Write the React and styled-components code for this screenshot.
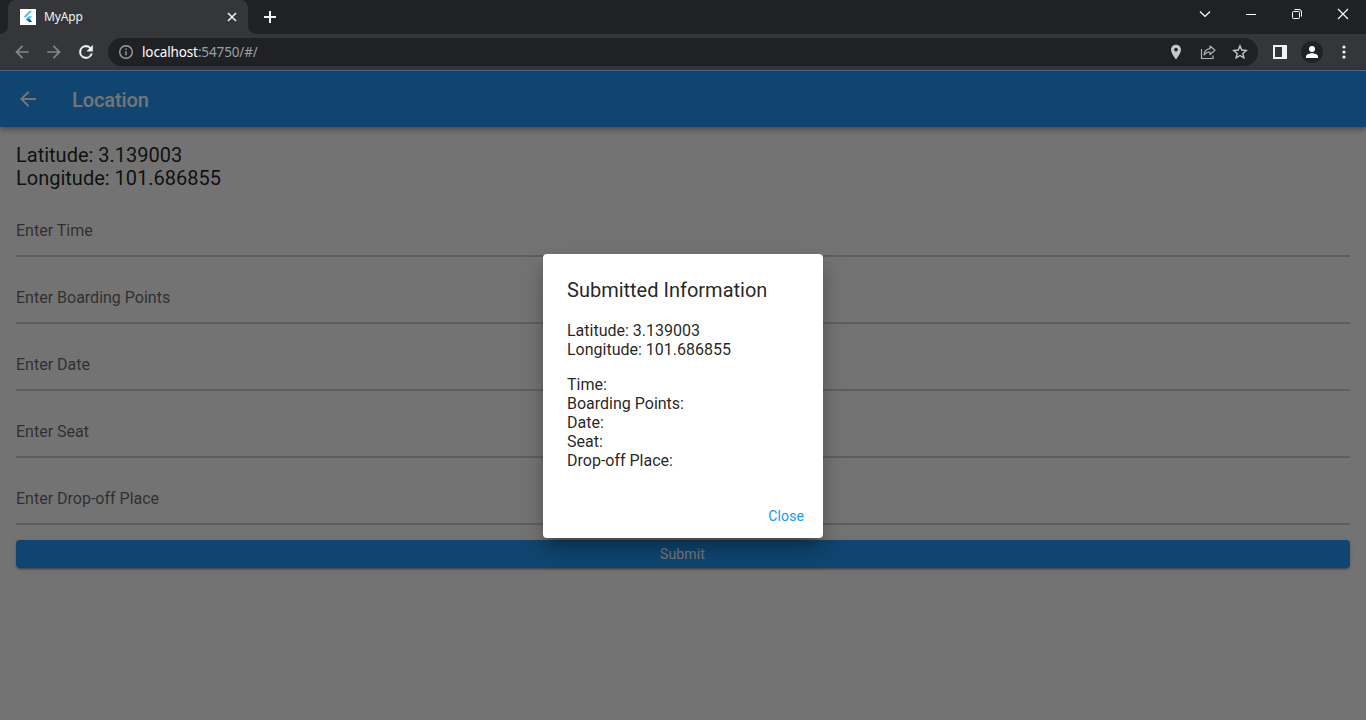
import React from "react";
import styled, { createGlobalStyle } from "styled-components";

const Global = createGlobalStyle`
  * { box-sizing: border-box; }
  html, body { margin: 0; padding: 0; height: 100%; overflow: hidden; }
  svg { display: block; flex: none; }
`;

const Browser = styled.div`
  width: 1366px;
  height: 720px;
  display: flex;
  flex-direction: column;
  overflow: hidden;
  background: #202124;
  font-family: "Noto Sans", "Open Sans", sans-serif;
`;

const TabStrip = styled.div`
  height: 34px;
  flex: none;
  display: flex;
  padding-left: 8px;
`;

const Tab = styled.div`
  position: relative;
  width: 240px;
  height: 34px;
  padding: 0 10px 0 12px;
  display: flex;
  align-items: center;
  border-radius: 8px 8px 0 0;
  background: #35363a;
  &::before, &::after {
    content: "";
    position: absolute;
    bottom: 0;
    width: 8px;
    height: 8px;
  }
  &::before {
    left: -8px;
    background: radial-gradient(circle at 0 0, transparent 7.5px, #35363a 8px);
  }
  &::after {
    right: -8px;
    background: radial-gradient(circle at 100% 0, transparent 7.5px, #35363a 8px);
  }
`;

const TabTitle = styled.span`
  flex: 1;
  margin-left: 8px;
  padding-bottom: 1px;
  font-size: 12px;
  line-height: 16px;
  letter-spacing: -0.15px;
  color: #f1f3f4;
`;

const NewTab = styled.div`
  width: 44px;
  display: flex;
  align-items: center;
  justify-content: center;
`;

const WindowButtons = styled.div`
  margin-left: auto;
  display: flex;
  height: 28px;
`;

const WindowButton = styled.div`
  width: 46px;
  display: flex;
  align-items: center;
  justify-content: center;
`;

const Toolbar = styled.div`
  height: 36px;
  flex: none;
  display: flex;
  align-items: center;
  padding: 0 6px;
  background: #35363a;
`;

const ToolButton = styled.div`
  width: 32px;
  height: 28px;
  display: flex;
  align-items: center;
  justify-content: center;
`;

const AddressBar = styled.div`
  flex: 1;
  height: 28px;
  margin: 0 6px;
  padding: 0 2px 0 10px;
  display: flex;
  align-items: center;
  border-radius: 14px;
  background: #202124;
`;

const Url = styled.span`
  flex: 1;
  margin-left: 8px;
  font-size: 13.5px;
  letter-spacing: -0.13px;
  color: #9aa0a6;
  white-space: nowrap;
`;

const Host = styled.span`
  color: #ffffff;
`;

const Avatar = styled.div`
  width: 22px;
  height: 22px;
  border-radius: 50%;
  display: flex;
  align-items: center;
  justify-content: center;
  background: #202124;
`;

const Divider = styled.div`
  height: 1px;
  flex: none;
  background: #4b6e8c;
`;

const Viewport = styled.div`
  position: relative;
  flex: 1;
  display: flex;
  flex-direction: column;
  background: #fafafa;
  font-family: Roboto, sans-serif;
`;

const AppBar = styled.header`
  height: 56px;
  flex: none;
  display: flex;
  align-items: center;
  gap: 32px;
  padding: 0 16px;
  background: #2196f3;
  box-shadow: 0 2px 4px -1px rgba(0, 0, 0, 0.2), 0 4px 5px rgba(0, 0, 0, 0.14),
    0 1px 10px rgba(0, 0, 0, 0.12);
`;

const AppTitle = styled.h1`
  margin: 0;
  padding-top: 2px;
  font-size: 20px;
  font-weight: 500;
  line-height: 24px;
  letter-spacing: -0.1px;
  color: #ffffff;
`;

const Content = styled.main`
  padding: 17px 16px 16px;
  display: flex;
  flex-direction: column;
`;

const Coordinates = styled.div`
  font-size: 20px;
  line-height: 23px;
  color: rgba(0, 0, 0, 0.87);
`;

const Form = styled.div`
  margin-top: 16px;
  display: flex;
  flex-direction: column;
  gap: 16px;
`;

const Field = styled.div`
  height: 51px;
  padding-top: 15px;
  border-bottom: 2px solid #cccccc;
  font-size: 16px;
  line-height: 19px;
  color: rgba(0, 0, 0, 0.6);
`;

const SubmitButton = styled.button`
  height: 28px;
  margin-top: 15px;
  padding: 0 1px 0 0;
  border: 0;
  border-radius: 4px;
  background: #2196f3;
  color: #ffffff;
  font: 400 14px/28px Roboto, sans-serif;
  letter-spacing: 0.1px;
  box-shadow: 0 3px 1px -2px rgba(0, 0, 0, 0.2), 0 2px 2px rgba(0, 0, 0, 0.14),
    0 1px 5px rgba(0, 0, 0, 0.12);
`;

const Scrim = styled.div`
  position: absolute;
  inset: 0;
  display: flex;
  align-items: center;
  justify-content: center;
  background: rgba(0, 0, 0, 0.54);
`;

const Dialog = styled.section`
  width: 280px;
  height: 284px;
  display: flex;
  flex-direction: column;
  border-radius: 4px;
  background: #ffffff;
  box-shadow: 0 10px 14px -6px rgba(0, 0, 0, 0.3), 0 10px 24px rgba(0, 0, 0, 0.2);
`;

const DialogTitle = styled.h2`
  margin: 0;
  padding: 24px 24px 19px;
  font-size: 20px;
  font-weight: 400;
  line-height: 24px;
  color: rgba(0, 0, 0, 0.87);
`;

const DialogBody = styled.div`
  flex: 1;
  padding: 0 24px;
  display: flex;
  flex-direction: column;
  gap: 16px;
  font-size: 16px;
  line-height: 19px;
  color: rgba(0, 0, 0, 0.87);
`;

const DialogActions = styled.div`
  display: flex;
  justify-content: flex-end;
  padding: 8px;
`;

const TextButton = styled.button`
  height: 28px;
  min-width: 56px;
  padding: 0 11px;
  border: 0;
  background: none;
  color: #2196f3;
  font: 400 14px/28px Roboto, sans-serif;
  letter-spacing: 0.1px;
`;

const FIELDS = ["Enter Time", "Enter Boarding Points", "Enter Date", "Enter Seat", "Enter Drop-off Place"];
const DETAILS = ["Time:", "Boarding Points:", "Date:", "Seat:", "Drop-off Place:"];

const FlutterLogo = () => (
  <svg width="16" height="16" viewBox="0 0 16 16">
    <rect width="16" height="16" fill="#fff" />
    <path d="M9.2 2H12.2L5.3 8.9 3.8 7.4Z" fill="#54c5f8" />
    <path d="M9.2 7H12.2L8.4 10.8 6.8 9.4Z" fill="#54c5f8" />
    <path d="M6.8 9.4 8.3 7.9 11 10.8 8.4 11Z" fill="#29a8ee" />
    <path d="M6.8 9.4 8.4 11 9.9 10.2 12.2 13H9.2L6.2 10.6Z" fill="#01579b" />
  </svg>
);

const ArrowIcon = ({ color, size = 20, flip }) => (
  <svg width={size} height={size} viewBox="0 0 24 24" fill={color}>
    <path
      transform={flip ? "rotate(180 12 12)" : undefined}
      d="M20 11H7.83l5.59-5.59L12 4l-8 8 8 8 1.41-1.41L7.83 13H20v-2z"
    />
  </svg>
);

const ReloadIcon = () => (
  <svg width="20" height="20" viewBox="0 0 24 24" fill="#f1f3f4" stroke="#f1f3f4" strokeWidth=".5">
    <path d="M17.65 6.35A7.96 7.96 0 0 0 12 4a8 8 0 1 0 7.73 10h-2.08A6 6 0 1 1 12 6c1.66 0 3.14.69 4.22 1.78L13 11h7V4z" />
  </svg>
);

export default function App() {
  return (
    <>
      <Global />
      <Browser>
        <TabStrip>
          <Tab>
            <FlutterLogo />
            <TabTitle>MyApp</TabTitle>
            <svg width="12" height="12" viewBox="0 0 12 12" stroke="#f1f3f4" strokeWidth="1.5">
              <path d="M2 2l8 8M10 2l-8 8" />
            </svg>
          </Tab>
          <NewTab>
            <svg width="14" height="14" viewBox="0 0 14 14" stroke="#f1f3f4" strokeWidth="2">
              <path d="M7 1v12M1 7h12" />
            </svg>
          </NewTab>
          <WindowButtons>
            <WindowButton>
              <svg width="12" height="12" viewBox="0 0 12 12" fill="none" stroke="#fff" strokeWidth="1.2">
                <path d="M1 3.5l5 5 5-5" />
              </svg>
            </WindowButton>
            <WindowButton>
              <svg width="12" height="12" viewBox="0 0 12 12" stroke="#fff">
                <path d="M1 6.5h10" />
              </svg>
            </WindowButton>
            <WindowButton>
              <svg width="12" height="12" viewBox="0 0 12 12" fill="none" stroke="#fff">
                <rect x="1.5" y="3.5" width="7" height="7" rx="1" />
                <path d="M3.5 1.5h4.5a2.5 2.5 0 0 1 2.5 2.5v4.5" />
              </svg>
            </WindowButton>
            <WindowButton>
              <svg width="12" height="12" viewBox="0 0 12 12" stroke="#fff" strokeWidth="1.1">
                <path d="M1 1l10 10M11 1L1 11" />
              </svg>
            </WindowButton>
          </WindowButtons>
        </TabStrip>
        <Toolbar>
          <ToolButton><ArrowIcon color="#85878a" /></ToolButton>
          <ToolButton><ArrowIcon color="#85878a" flip /></ToolButton>
          <ToolButton><ReloadIcon /></ToolButton>
          <AddressBar>
            <svg width="16" height="16" viewBox="0 0 16 16" fill="none" stroke="#9aa0a6" strokeWidth="1.4">
              <circle cx="8" cy="8" r="6.3" />
              <path d="M8 7.2v4M8 4.6v1.5" />
            </svg>
            <Url><Host>localhost</Host>:54750/#/</Url>
            <ToolButton>
              <svg width="16" height="16" viewBox="0 0 24 24" fill="#c4c7c9">
                <path d="M12 1C7.6 1 4.5 4.3 4.5 8.5 4.5 14 12 23 12 23s7.5-9 7.5-14.5C19.5 4.3 16.4 1 12 1zm0 10.2a2.7 2.7 0 1 1 0-5.4 2.7 2.7 0 0 1 0 5.4z" />
              </svg>
            </ToolButton>
            <ToolButton>
              <svg width="16" height="16" viewBox="0 0 16 16" fill="none" stroke="#b0b3b6" strokeWidth="1.2">
                <path d="M1.500 5v9.500h11.500V11.500" />
                <path d="M10 2l5 4.300-5 4.200V8C7.500 8 5.500 8.900 4 11c.4-3.500 2.500-6 6-6.400z" strokeLinejoin="round" />
              </svg>
            </ToolButton>
            <ToolButton>
              <svg width="16" height="16" viewBox="0 0 16 16" fill="none" stroke="#c4c7c9" strokeWidth="1.4">
                <path d="M8 1.900l1.750 4.150 4.500.4-3.400 2.950 1 4.400L8 11.500l-3.850 2.300 1-4.400-3.400-2.950 4.500-.4z" />
              </svg>
            </ToolButton>
          </AddressBar>
          <ToolButton>
            <svg width="14" height="14" viewBox="0 0 14 14">
              <path fill="#f1f3f4" fillRule="evenodd" d="M0 0h14v14H0zM2 2v10h7V2z" />
            </svg>
          </ToolButton>
          <ToolButton>
            <Avatar>
              <svg width="12" height="12" viewBox="0 0 12 12" fill="#fff">
                <circle cx="6" cy="3" r="3" />
                <path d="M0 12v-1.500C0 8.300 4 7.300 6 7.300s6 1 6 3.200V12z" />
              </svg>
            </Avatar>
          </ToolButton>
          <ToolButton>
            <svg width="4" height="14" viewBox="0 0 4 14" fill="#f1f3f4">
              <circle cx="2" cy="2" r="1.6" />
              <circle cx="2" cy="7" r="1.6" />
              <circle cx="2" cy="12" r="1.6" />
            </svg>
          </ToolButton>
        </Toolbar>
        <Divider />
        <Viewport>
          <AppBar>
            <ArrowIcon color="#fff" size={24} />
            <AppTitle>Location</AppTitle>
          </AppBar>
          <Content>
            <Coordinates>
              <div>Latitude: 3.139003</div>
              <div>Longitude: 101.686855</div>
            </Coordinates>
            <Form>
              {FIELDS.map((label) => (
                <Field key={label}>{label}</Field>
              ))}
            </Form>
            <SubmitButton>Submit</SubmitButton>
          </Content>
          <Scrim>
            <Dialog>
              <DialogTitle>Submitted Information</DialogTitle>
              <DialogBody>
                <div>
                  <div>Latitude: 3.139003</div>
                  <div>Longitude: 101.686855</div>
                </div>
                <div>
                  {DETAILS.map((line) => (
                    <div key={line}>{line}</div>
                  ))}
                </div>
              </DialogBody>
              <DialogActions>
                <TextButton>Close</TextButton>
              </DialogActions>
            </Dialog>
          </Scrim>
        </Viewport>
      </Browser>
    </>
  );
}
